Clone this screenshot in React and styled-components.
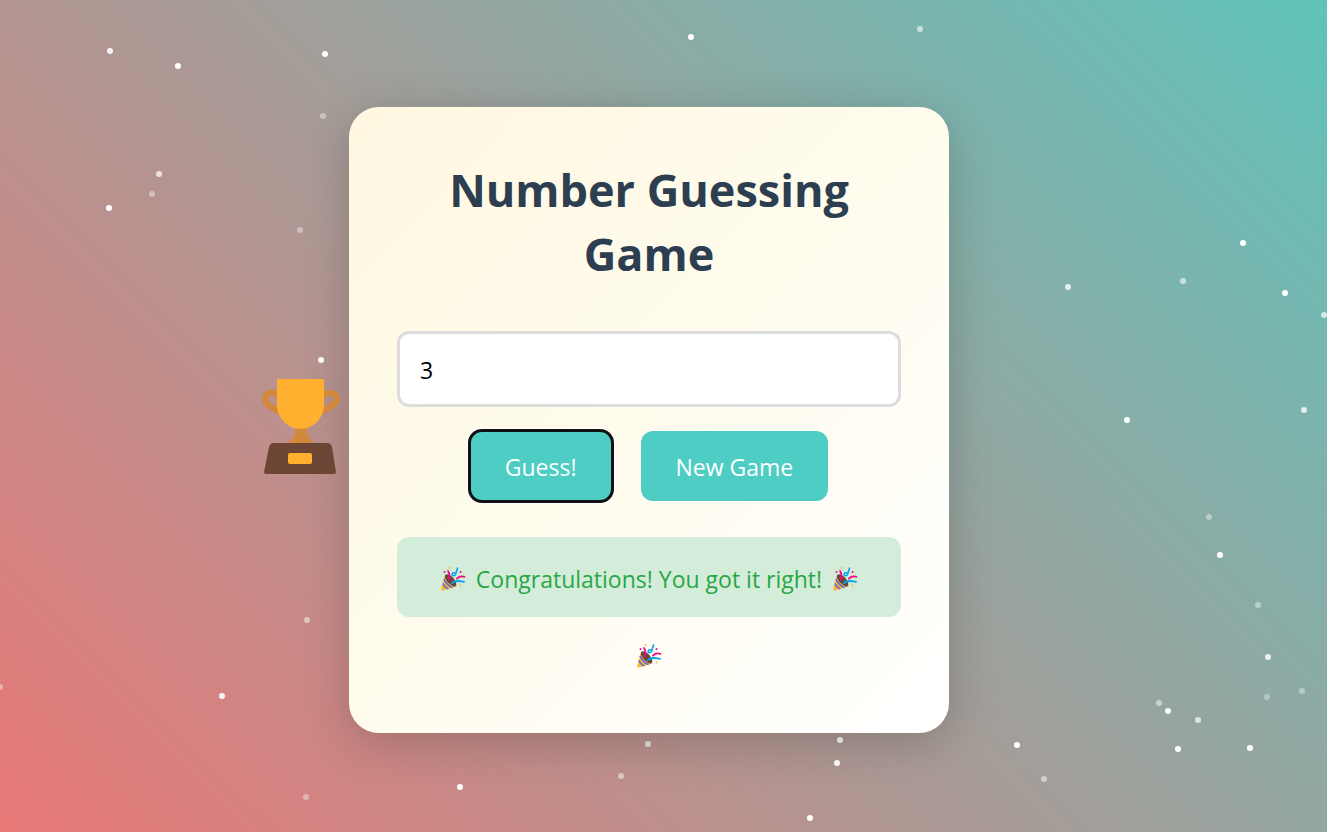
import React, { useState } from "react";
import styled, { createGlobalStyle } from "styled-components";

const GlobalStyle = createGlobalStyle`
  *, *::before, *::after { box-sizing: border-box; }
  body {
    margin: 0;
    font-family: "Segoe UI", "Open Sans", "Noto Sans", sans-serif;
  }
`;

const Page = styled.div`
  position: relative;
  display: flex;
  align-items: center;
  justify-content: center;
  min-height: 100vh;
  padding: 8px 29px 0 0;
  overflow: hidden;
  background: linear-gradient(45deg, #ff6b6b -17%, #4ecdc4 113%);
`;

const Particle = styled.span`
  position: absolute;
  width: 6px;
  height: 6px;
  margin: -3px 0 0 -3px;
  border-radius: 50%;
  background: #fff;
`;

const Card = styled.main`
  position: relative;
  width: 600px;
  max-width: 100%;
  padding: 48px;
  border-radius: 30px;
  background: linear-gradient(135deg, #fff7e0, #fffcee 50%, #ffffff);
  box-shadow: 0 10px 48px rgba(0, 0, 0, 0.2);
  text-align: center;
`;

const Trophy = styled.svg`
  position: absolute;
  top: 271px;
  left: -89px;
  width: 80px;
  height: 97px;
`;

const Title = styled.h1`
  margin: 0;
  padding: 3px 0 45px;
  color: #2c3e50;
  font-size: 45px;
  line-height: 64px;
  font-weight: 700;
`;

const GuessForm = styled.form`
  display: flex;
  flex-direction: column;
  gap: 24px;
`;

const NumberInput = styled.input`
  width: 100%;
  height: 76px;
  padding: 2px 20px 0;
  border: 3px solid #ddd;
  border-radius: 12px;
  background: #fff;
  color: #000;
  font: inherit;
  font-size: 23px;
`;

const Actions = styled.div`
  display: flex;
  justify-content: center;
  gap: 29px;
`;

const Button = styled.button`
  height: 70px;
  padding: 2px 35px 0;
  border: 0;
  border-radius: 12px;
  background: #4ecdc4;
  color: #fff;
  font: inherit;
  font-size: 23px;
  cursor: pointer;
  outline: ${(p) => (p.$ring ? "3px solid #101010" : "none")};
  outline-offset: -1px;
  box-shadow: ${(p) => (p.$ring ? "0 0 0 3px #fff" : "none")};
`;

const Message = styled.p`
  display: flex;
  align-items: center;
  justify-content: center;
  gap: 10px;
  margin: 36px 0 0;
  padding: 26px 24px 22px;
  border-radius: 12px;
  background: #d4edda;
  color: #28a745;
  font-size: 23px;
  line-height: 32px;
`;

const Celebration = styled.div`
  display: flex;
  justify-content: center;
  height: 68px;
  padding-top: 26px;
`;

const PopperIcon = styled.svg`
  width: 26px;
  height: 26px;
  flex: none;
`;

const particles = [
  [110, 51, 0.9], [178, 66, 1], [325, 54, 1], [323, 116, 0.4], [159, 174, 0.75],
  [152, 194, 0.4], [109, 208, 1], [300, 230, 0.4], [321, 360, 1], [691, 37, 1],
  [920, 29, 0.6], [1243, 243, 1], [1183, 281, 0.6], [1068, 287, 0.8], [1285, 293, 1],
  [1324, 315, 0.7], [1304, 410, 0.8], [1127, 420, 1], [1209, 517, 0.4], [1220, 555, 1],
  [1258, 605, 0.4], [1268, 657, 0.85], [1302, 691, 0.35], [1267, 697, 0.35],
  [1159, 703, 0.5], [1168, 711, 1], [1198, 720, 0.7], [1178, 749, 1], [1250, 748, 1],
  [1017, 745, 1], [1044, 779, 0.5], [840, 740, 0.9], [837, 763, 1], [810, 818, 1],
  [648, 744, 0.7], [621, 776, 0.5], [460, 787, 1], [306, 797, 0.4], [307, 620, 0.5],
  [222, 696, 0.9], [0, 687, 0.4],
];

function Popper() {
  return (
    <PopperIcon viewBox="0 0 26 26" aria-hidden="true">
      <ellipse cx="10.5" cy="14.5" rx="7.6" ry="3.8" transform="rotate(48 10.5 14.5)" fill="#6d4534" />
      <path fill="#ffb62e" d="M4.600 10.500C6 15 10 19.500 15 21L3 24.500Q1 24.800 1.300 22.800z" />
      <g fill="none" stroke="#5965e8" strokeWidth="1.7">
        <path d="M4 13q2.500 6 8.500 8.500" />
        <path d="M2.800 17.500q1.800 4 5.500 5.500" />
      </g>
      <g fill="none" strokeLinecap="round" strokeLinejoin="round" strokeWidth="1.8">
        <path stroke="#f5088c" d="M8 5c2 3 2 5 .5 8.500" />
        <path stroke="#f5088c" d="M17 12.500q3-3 7.500-1.700" />
        <path stroke="#08a5ec" d="M11.500 17.500c3-3.500 7-3 12.500-1.700" />
        <path stroke="#08a5ec" strokeWidth="1.600" d="M17.500 2l-2 6.500c-.8 2-3.800 1.500-3.300-.5.4-1.700 2.600-1.700 3.300-.2" />
      </g>
      <g fill="#f5088c">
        <circle cx="4.500" cy="6" r="1" />
        <circle cx="20.500" cy="6" r="1" />
      </g>
      <g fill="#ffb62e">
        <circle cx="9.500" cy="2" r="0.900" />
        <circle cx="20.500" cy="19.500" r="0.900" />
      </g>
    </PopperIcon>
  );
}

export default function App() {
  const [guess, setGuess] = useState("3");

  return (
    <>
      <GlobalStyle />
      <Page>
        {particles.map(([x, y, opacity]) => (
          <Particle key={`${x}-${y}`} style={{ left: x, top: y, opacity }} />
        ))}
        <Card>
          <Trophy viewBox="0 0 80 97" role="img" aria-label="Trophy">
            <g fill="none" stroke="#d3883b" strokeWidth="6">
              <path d="M18 17C11 12 5 16 5 21S9 28 20 34" />
              <path d="M63 17C70 12 77 16 77 21S72 28 61 34" />
            </g>
            <path fill="#d3883b" d="M35 48h12v6q0 5 9 13H26q9-8 9-13z" />
            <path
              fill="#ffb02e"
              d="M19 1h43q2 0 2 2v24c0 13-11 24-23.500 24S17 40 17 27V3q0-2 2-2z"
            />
            <path fill="#6d4534" d="M14 65h53q4 0 5 4l4 25q0 2-2 2H6q-2 0-2-2l5-25q1-4 5-4z" />
            <rect x="28" y="75" width="24" height="11" rx="2" fill="#ffb02e" />
          </Trophy>
          <Title>Number Guessing Game</Title>
          <GuessForm onSubmit={(e) => e.preventDefault()}>
            <NumberInput
              aria-label="Your guess"
              inputMode="numeric"
              value={guess}
              onChange={(e) => setGuess(e.target.value)}
            />
            <Actions>
              <Button type="submit" $ring>Guess!</Button>
              <Button type="button" onClick={() => setGuess("")}>New Game</Button>
            </Actions>
          </GuessForm>
          <Message role="status">
            <Popper />
            <span>Congratulations! You got it right!</span>
            <Popper />
          </Message>
          <Celebration>
            <Popper />
          </Celebration>
        </Card>
      </Page>
    </>
  );
}
